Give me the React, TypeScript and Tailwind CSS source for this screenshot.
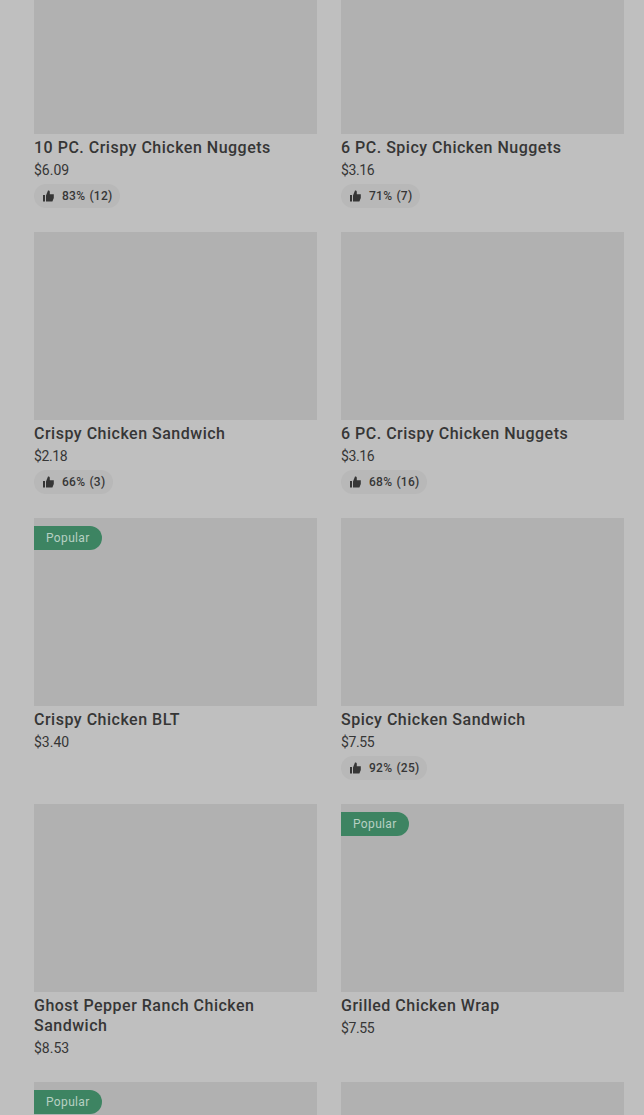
import * as React from "react";

type Item = {
  name: string;
  price: string;
  tight?: boolean;
  rating?: string;
  popular?: boolean;
};

const ITEMS: Array<Item> = [
  { name: "10 PC. Crispy Chicken Nuggets", price: "$6.09", rating: "83% (12)" },
  { name: "6 PC. Spicy Chicken Nuggets", price: "$3.16", tight: true, rating: "71% (7)" },
  { name: "Crispy Chicken Sandwich", price: "$2.18", tight: true, rating: "66% (3)" },
  { name: "6 PC. Crispy Chicken Nuggets", price: "$3.16", tight: true, rating: "68% (16)" },
  { name: "Crispy Chicken BLT", price: "$3.40", popular: true },
  { name: "Spicy Chicken Sandwich", price: "$7.55", tight: true, rating: "92% (25)" },
  { name: "Ghost Pepper Ranch Chicken Sandwich", price: "$8.53" },
  { name: "Grilled Chicken Wrap", price: "$7.55", tight: true, popular: true },
];

const ThumbUp = () => (
  <svg width="12" height="12" viewBox="0 0 12 12" fill="currentColor" aria-hidden="true">
    <path d="M1 5h2v6.5H1zM4 5.4 6 0.6h0.5c0.8 0 1.3 0.6 1.3 1.4v2.3h4v3.7l-1.4 3.5H4z"/>
  </svg>
);

const Popular = () => (
  <span className="absolute left-0 top-2 h-6 w-[68px] pl-3 rounded-r-full bg-[#3d8462] text-[#b7d0c3] text-[12px] leading-6 tracking-[0.35px]">
    Popular
  </span>
);

const Card = ({ item }: { item: Item }) => (
  <div className="flex flex-col items-start">
    <div className="relative w-full h-[188px] bg-[#b1b1b1]">
      {item.popular && <Popular/>}
    </div>
    <h3 className="mt-1 text-[16px] leading-5 font-medium tracking-[0.5px]">{item.name}</h3>
    <p className={item.tight ? "mt-0.5 text-[14px] leading-5 tracking-[-0.4px]" : "mt-0.5 text-[14px] leading-5"}>
      {item.price}
    </p>
    {item.rating && (
      <div className="mt-1 h-6 px-2 flex items-center gap-2 rounded-full bg-[#b8b8b8]">
        <ThumbUp/>
        <span className="text-[12px] leading-5 font-medium tracking-[0.25px] [word-spacing:1px]">{item.rating}</span>
      </div>
    )}
  </div>
);

const App = () => {
  return (
    <div className="w-full h-[1115px] overflow-hidden flex flex-col justify-end bg-[#bfbfbf] text-[#363636] font-['Roboto',sans-serif]">
      {/* MENU ITEMS */}
      <div className="grid grid-cols-[283px_283px] gap-6 pl-[34px] shrink-0">
        {ITEMS.map((item: Item) => (
          <Card key={item.name} item={item}/>
        ))}
        {/* next row, only its top is in view */}
        <div className="relative h-[33px] bg-[#b1b1b1]"><Popular/></div>
        <div className="h-[33px] bg-[#b1b1b1]"/>
      </div>
    </div>
  )
}

export default App;
